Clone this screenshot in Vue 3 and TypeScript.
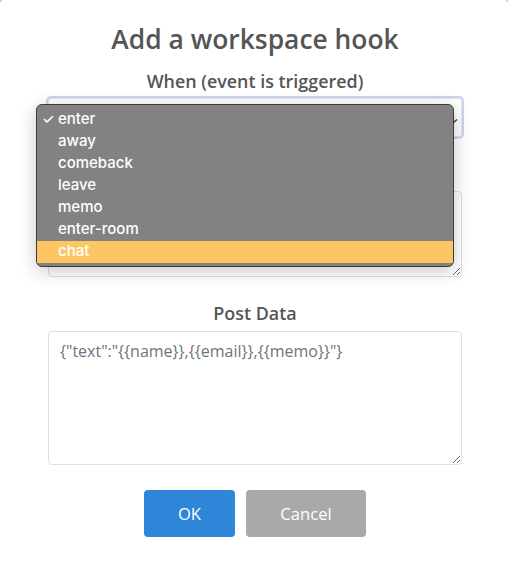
<script setup lang="ts">
import { ref } from 'vue'

const events = ['enter', 'away', 'comeback', 'leave', 'memo', 'enter-room', 'chat']
const selected = ref('enter')
const hovered = ref('chat')
const url = ref('')
const postData = ref('{"text":"{{name}},{{email}},{{memo}}"}')
</script>

<template>
  <div class="page">
    <div class="modal">
      <h2 class="title">Add a workspace hook</h2>

      <div class="field when">
        <label class="label">When (event is triggered)</label>
        <div class="select-wrap">
          <div class="select-box">
            <svg class="chevron" width="8" height="10" viewBox="0 0 8 10">
              <path d="M1 6.5 L4 9 L7 6.5" fill="none" stroke="#444" stroke-width="1.6" />
            </svg>
          </div>
          <ul class="menu">
            <li
              v-for="ev in events"
              :key="ev"
              class="menu-item"
              :class="{ active: ev === hovered }"
            >
              <span class="check">{{ ev === selected ? '✓' : '' }}</span>{{ ev }}
            </li>
          </ul>
        </div>
      </div>

      <div class="field url">
        <textarea v-model="url" class="input url-input"></textarea>
      </div>

      <div class="field post">
        <label class="label">Post Data</label>
        <textarea v-model="postData" class="input post-input"></textarea>
      </div>

      <div class="buttons">
        <button class="btn ok">OK</button>
        <button class="btn cancel">Cancel</button>
      </div>
    </div>
  </div>
</template>

<style scoped>
.page {
  width: 508px;
  height: 561px;
  background: #c4c4c4;
}
.modal {
  box-sizing: border-box;
  width: 508px;
  height: 561px;
  padding: 21px 46px 0 48px;
  background: #fff;
  border-radius: 4px 4px 0 0;
  color: #555;
  font-family: "Open Sans", sans-serif;
}
.title {
  margin: 0;
  font-size: 26.4px;
  line-height: 37px;
  font-weight: 600;
  text-align: center;
}
.field {
  display: flex;
  flex-direction: column;
  align-items: center;
}
.when {
  margin-top: 11px;
}
.label {
  font-size: 17.9px;
  line-height: 24px;
  font-weight: 600;
}
.select-wrap {
  position: relative;
  width: 414px;
  margin-top: 5px;
}
.select-box {
  box-sizing: border-box;
  display: flex;
  align-items: center;
  justify-content: flex-end;
  height: 39px;
  padding-right: 3px;
  border: 1px solid #e4e4e4;
  border-radius: 3px;
  background: #fff;
  box-shadow: 0 0 0 2px #c9d6f0;
}
.menu {
  position: absolute;
  top: 6px;
  left: -12px;
  box-sizing: border-box;
  width: 418px;
  height: 163px;
  margin: 0;
  padding: 4px 0 0;
  list-style: none;
  background: #828282;
  border: 1px solid #3c3c3c;
  border-radius: 6px;
  box-shadow: 0 4px 18px rgba(0, 0, 0, 0.22);
  font-family: Inter, "Liberation Sans", sans-serif;
  font-size: 15px;
  font-weight: 500;
  color: #fff;
}
.menu-item {
  box-sizing: border-box;
  display: flex;
  align-items: center;
  height: 22px;
  padding: 0 0 4px 5px;
}
.menu-item.active {
  background: #fec662;
}
.check {
  width: 16px;
  font-size: 14px;
}
.url {
  margin-top: 54px;
}
.input {
  box-sizing: border-box;
  display: block;
  width: 414px;
  padding: 7px 12px 7px 11px;
  border: 1px solid #e0e0e0;
  border-radius: 4px;
  background: #fff;
  color: #6c757d;
  font-family: "Open Sans", sans-serif;
  font-size: 16px;
  line-height: 24px;
  outline: none;
}
.url-input {
  height: 86px;
}
.post {
  margin-top: 24px;
}
.post-input {
  height: 134px;
  margin-top: 6px;
}
.buttons {
  display: flex;
  justify-content: center;
  gap: 11px;
  margin-top: 25px;
}
.btn {
  height: 47px;
  border: 0;
  border-radius: 4px;
  color: #fff;
  font-family: "Open Sans", sans-serif;
  font-size: 16.6px;
}
.ok {
  width: 91px;
  background: #2f85d8;
}
.cancel {
  width: 120px;
  background: #a9a9a9;
}
</style>
